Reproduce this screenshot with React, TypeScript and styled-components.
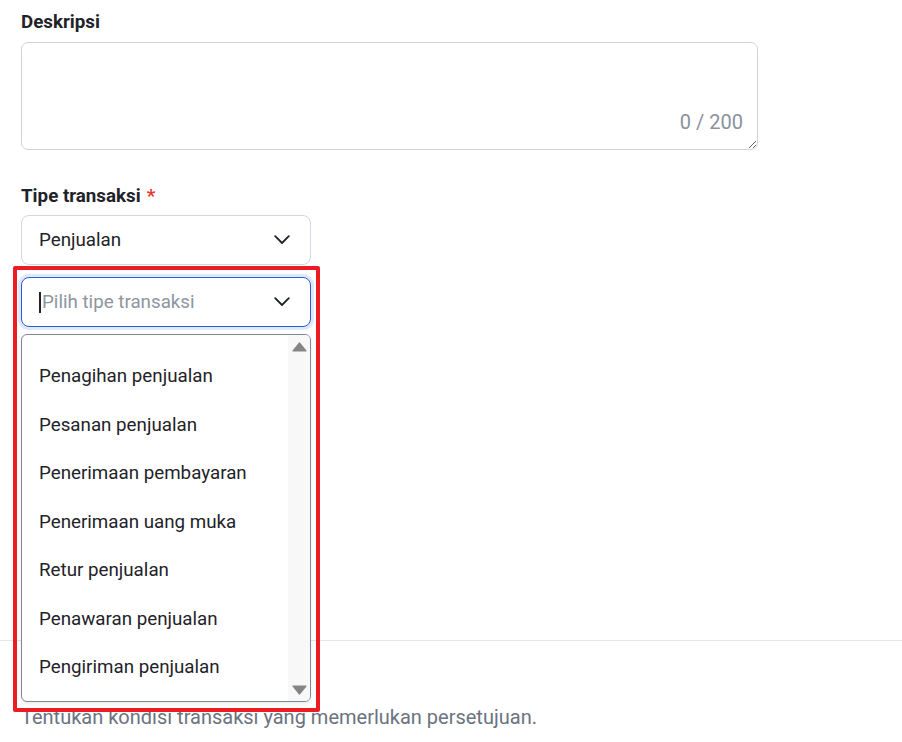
import React from "react";
import styled, { createGlobalStyle } from "styled-components";

const GlobalStyle = createGlobalStyle`
  body {
    margin: 0;
    background: #ffffff;
    font-family: Roboto, "Liberation Sans", Arial, sans-serif;
    color: #1f2329;
  }
`;

const Page = styled.div`
  padding: 10px 0 40px 21px;
  overflow: hidden;
`;

const Field = styled.div<{ $gap?: number }>`
  display: flex;
  flex-direction: column;
  margin-bottom: ${(p) => p.$gap ?? 0}px;
`;

const Label = styled.label<{ $space?: number }>`
  font-size: 18.75px;
  line-height: 24px;
  font-weight: 700;
  color: #1f2329;
  margin-bottom: ${(p) => p.$space ?? 8}px;
`;

const Required = styled.span`
  color: #e53935;
  margin-left: 6px;
`;

const TextAreaBox = styled.div`
  position: relative;
  width: 737px;
  height: 108px;
`;

const TextArea = styled.textarea`
  box-sizing: border-box;
  width: 100%;
  height: 100%;
  border: 1px solid #cfd4dc;
  border-radius: 7px;
  resize: both;
  outline: none;
  font: inherit;
  padding: 12px 16px;
`;

const Counter = styled.span`
  position: absolute;
  right: 15px;
  bottom: 17px;
  font-size: 20px;
  line-height: 22px;
  color: #8a929e;
  pointer-events: none;
`;

const Select = styled.div<{ $focused?: boolean }>`
  box-sizing: border-box;
  width: 290px;
  height: 50px;
  display: flex;
  align-items: center;
  justify-content: space-between;
  padding: 0 20px 0 17px;
  border: 1px solid ${(p) => (p.$focused ? "#2f5bd0" : "#d3d7de")};
  border-radius: 8px;
  box-shadow: ${(p) => (p.$focused ? "0 0 0 3px #dde9fb" : "none")};
  background: #fff;
  font-size: 18.75px;
  color: #1f2329;
`;

const Placeholder = styled.span`
  display: flex;
  align-items: center;
  color: #8d95a1;
`;

const Caret = styled.span`
  display: inline-block;
  width: 2px;
  height: 21px;
  background: #1f2329;
  margin-right: 1px;
`;

const Combo = styled.div`
  position: relative;
  margin-top: 12px;
`;

const Frame = styled.div`
  position: absolute;
  top: -11px;
  left: -8px;
  width: 307px;
  height: 446px;
  box-sizing: border-box;
  border: 4px solid #ec1c24;
  border-radius: 2px;
  z-index: 3;
  pointer-events: none;
`;

const Menu = styled.div`
  position: absolute;
  top: 57px;
  left: 0;
  box-sizing: border-box;
  width: 290px;
  height: 368px;
  display: flex;
  background: #fff;
  border: 1px solid #7f8796;
  border-radius: 6px;
  box-shadow: 0 2px 4px rgba(0, 0, 0, 0.08);
  overflow: hidden;
  z-index: 2;
`;

const Options = styled.ul`
  flex: 1;
  list-style: none;
  margin: 0;
  padding: 17px 0 0;
`;

const Option = styled.li`
  height: 48.5px;
  line-height: 48.5px;
  padding-left: 17px;
  font-size: 18.75px;
  color: #1f2329;
  white-space: nowrap;
`;

const ScrollTrack = styled.div`
  width: 22px;
  background: #f8f8f8;
  display: flex;
  flex-direction: column;
  align-items: center;
  justify-content: space-between;
  padding: 7px 0 6px;
`;

const Divider = styled.hr`
  border: none;
  border-top: 1px solid #e3e5e8;
  margin: 313px 0 0 -21px;
  width: calc(100% + 21px);
`;

const Hint = styled.p`
  margin: 64px 0 0;
  font-size: 20px;
  line-height: 24px;
  color: #6b7280;
`;

const Chevron = () => (
  <svg width="16" height="10" viewBox="0 0 16 10" fill="none">
    <polyline
      points="1.2,1.2 8,8 14.8,1.2"
      stroke="#1f2329"
      strokeWidth="1.8"
      strokeLinecap="round"
      strokeLinejoin="round"
    />
  </svg>
);

const Arrow = ({ down }: { down?: boolean }) => (
  <svg width="15" height="10" viewBox="0 0 15 10">
    <polygon
      points={down ? "1,1 14,1 7.5,9" : "1,9 14,9 7.5,1"}
      fill="#858585"
      stroke="#858585"
      strokeWidth="1.2"
      strokeLinejoin="round"
    />
  </svg>
);

const options = [
  "Penagihan penjualan",
  "Pesanan penjualan",
  "Penerimaan pembayaran",
  "Penerimaan uang muka",
  "Retur penjualan",
  "Penawaran penjualan",
  "Pengiriman penjualan",
];

export default function App() {
  return (
    <>
      <GlobalStyle />
      <Page>
        <Field $gap={34}>
          <Label>Deskripsi</Label>
          <TextAreaBox>
            <TextArea />
            <Counter>0 / 200</Counter>
          </TextAreaBox>
        </Field>

        <Field>
          <Label $space={7}>
            Tipe transaksi<Required>*</Required>
          </Label>
          <Select>
            <span>Penjualan</span>
            <Chevron />
          </Select>
          <Combo>
            <Select $focused>
              <Placeholder>
                <Caret />
                Pilih tipe transaksi
              </Placeholder>
              <Chevron />
            </Select>
            <Menu>
              <Options>
                {options.map((o) => (
                  <Option key={o}>{o}</Option>
                ))}
              </Options>
              <ScrollTrack>
                <Arrow />
                <Arrow down />
              </ScrollTrack>
            </Menu>
            <Frame />
          </Combo>
        </Field>

        <Divider />
        <Hint>Tentukan kondisi transaksi yang memerlukan persetujuan.</Hint>
      </Page>
    </>
  );
}
